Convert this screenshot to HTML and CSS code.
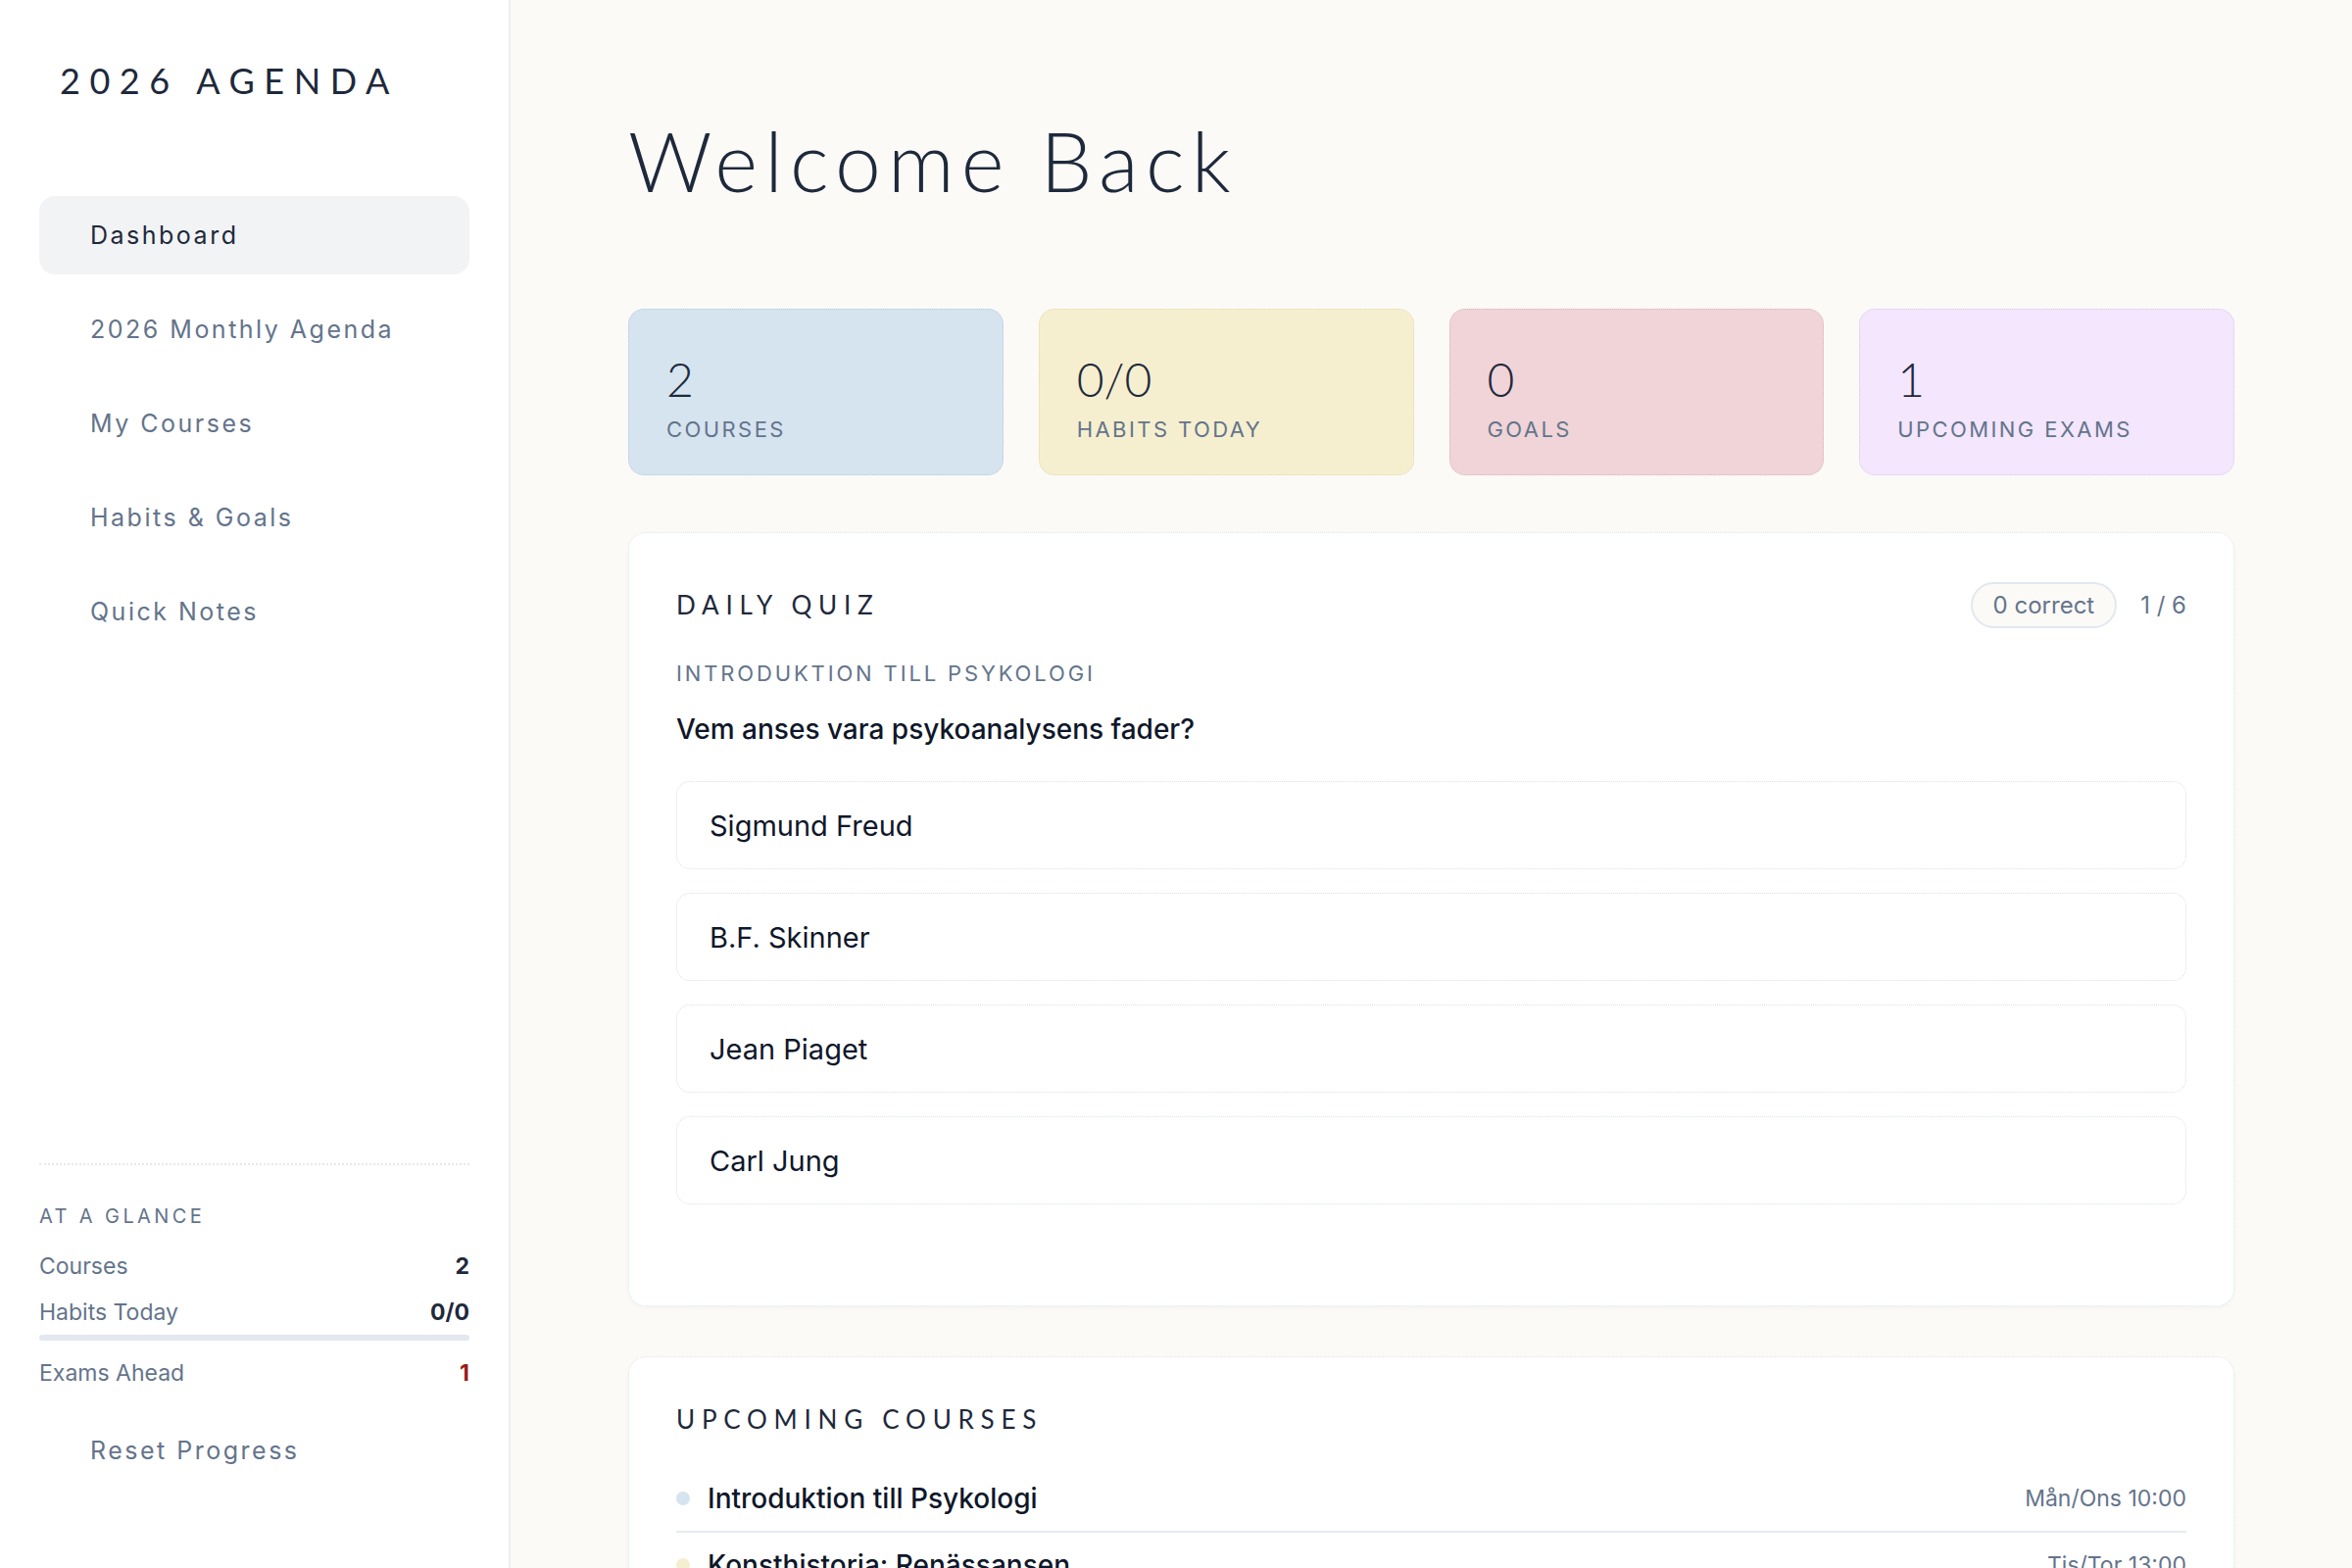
FILE: index.html
```html
<!DOCTYPE html>
<html lang="en">
<head>
  <meta charset="UTF-8">
  <title>2026 Agenda</title>
  <link rel="stylesheet" href="styles.css">
</head>
<body>

  <aside class="sidebar">
    <div class="brand">2026 AGENDA</div>

    <nav class="nav">
      <a class="nav-item active">Dashboard</a>
      <a class="nav-item">2026 Monthly Agenda</a>
      <a class="nav-item">My Courses</a>
      <a class="nav-item">Habits &amp; Goals</a>
      <a class="nav-item">Quick Notes</a>
    </nav>

    <div class="glance">
      <div class="glance-title">AT A GLANCE</div>
      <div class="glance-row"><span>Courses</span><strong>2</strong></div>
      <div class="glance-row habits"><span>Habits Today</span><strong>0/0</strong></div>
      <div class="glance-bar"><div class="glance-fill" style="width: 0%"></div></div>
      <div class="glance-row"><span>Exams Ahead</span><strong class="alert">1</strong></div>
    </div>

    <button class="reset">Reset Progress</button>
  </aside>

  <main class="main">
    <h1 class="welcome">Welcome Back</h1>

    <!-- Stats -->
    <div class="stats">
      <div class="stat blue">
        <div class="stat-num">2</div>
        <div class="stat-label">COURSES</div>
      </div>
      <div class="stat yellow">
        <div class="stat-num">0/0</div>
        <div class="stat-label">HABITS TODAY</div>
      </div>
      <div class="stat pink">
        <div class="stat-num">0</div>
        <div class="stat-label">GOALS</div>
      </div>
      <div class="stat lavender">
        <div class="stat-num">1</div>
        <div class="stat-label">UPCOMING EXAMS</div>
      </div>
    </div>

    <!-- Quiz -->
    <section class="card quiz">
      <div class="quiz-head">
        <h2 class="card-title">DAILY QUIZ</h2>
        <div class="quiz-meta">
          <span class="score">0 correct</span>
          <span class="count">1 / 6</span>
        </div>
      </div>
      <div class="quiz-course">INTRODUKTION TILL PSYKOLOGI</div>
      <div class="quiz-question">Vem anses vara psykoanalysens fader?</div>
      <div class="options">
        <button class="option">Sigmund Freud</button>
        <button class="option">B.F. Skinner</button>
        <button class="option">Jean Piaget</button>
        <button class="option">Carl Jung</button>
      </div>
    </section>

    <!-- Upcoming -->
    <section class="card upcoming">
      <h2 class="card-title">UPCOMING COURSES</h2>
      <div class="course-list">
        <div class="course-row">
          <span class="dot blue-dot"></span>
          <span class="course-name">Introduktion till Psykologi</span>
          <span class="course-time">Mån/Ons 10:00</span>
        </div>
        <div class="course-row">
          <span class="dot yellow-dot"></span>
          <span class="course-name">Konsthistoria: Renässansen</span>
          <span class="course-time">Tis/Tor 13:00</span>
        </div>
      </div>
    </section>
  </main>

</body>
</html>
```

FILE: styles.css
```css
body {
  margin: 0;
  height: 100vh;
  display: flex;
  overflow: hidden;
  background: #fbfaf7;
  font-family: 'Inter', 'Liberation Sans', sans-serif;
  color: #1e293b;
}

/* Sidebar */
.sidebar {
  width: 521px;
  flex-shrink: 0;
  box-sizing: border-box;
  background: #fff;
  border-right: 2px solid #eceef1;
  padding: 60px 40px 101px;
  display: flex;
  flex-direction: column;
}

.brand {
  font-family: 'Lato', sans-serif;
  font-weight: 400;
  font-size: 36px;
  line-height: 44px;
  letter-spacing: 0.265em;
  padding-left: 21px;
  color: #1e293b;
}

.nav {
  margin-top: 96px;
  display: flex;
  flex-direction: column;
  gap: 16px;
}

.nav-item {
  display: block;
  height: 80px;
  line-height: 80px;
  padding: 0 52px;
  border-radius: 16px;
  font-size: 25px;
  letter-spacing: 0.1em;
  color: #64748b;
  cursor: pointer;
}

.nav-item.active {
  background: #f2f3f5;
  color: #1e293b;
}

.glance {
  margin-top: auto;
  border-top: 2px dotted #e5e8ee;
  padding-top: 38px;
}

.glance-title {
  font-size: 20px;
  line-height: 28px;
  letter-spacing: 0.17em;
  color: #64748b;
  margin-bottom: 22px;
}

.glance-row {
  display: flex;
  justify-content: space-between;
  font-size: 23px;
  line-height: 30px;
  color: #64748b;
  margin-bottom: 17px;
}

.glance-row.habits {
  margin-bottom: 8px;
}

.glance-row:last-child {
  margin-bottom: 0;
}

.glance-row strong {
  color: #1e293b;
  font-weight: 700;
}

.glance-row strong.alert {
  color: #991b1b;
}

.glance-bar {
  height: 6px;
  border-radius: 3px;
  background: #e2e8f0;
  margin-bottom: 18px;
  overflow: hidden;
}

.glance-fill {
  height: 100%;
  background: #94a3b8;
}

.reset {
  margin-top: 45px;
  align-self: flex-start;
  background: none;
  border: none;
  padding: 0 52px;
  font-family: inherit;
  font-size: 25px;
  line-height: 38px;
  letter-spacing: 0.1em;
  color: #64748b;
  cursor: pointer;
}

/* Main */
.main {
  flex: 1;
  min-width: 0;
  padding: 113px 120px 0;
  overflow: hidden;
}

.welcome {
  margin: 0 0 101px;
  font-family: 'Lato', sans-serif;
  font-weight: 300;
  font-size: 84px;
  line-height: 101px;
  letter-spacing: 0.085em;
  color: #1e293b;
}

.stats {
  display: grid;
  grid-template-columns: repeat(4, 1fr);
  gap: 36px;
}

.stat {
  border: 1px dotted;
  border-radius: 16px;
  padding: 47px 38px 31px;
}

.stat.blue { background: #d6e4f0; border-color: #b4c8dc; }
.stat.yellow { background: #f6efcf; border-color: #e3d9a8; }
.stat.pink { background: #f0d4d8; border-color: #dcb3ba; }
.stat.lavender { background: #f3e6fd; border-color: #d8c6ee; }

.stat-num {
  font-family: 'Lato', sans-serif;
  font-weight: 300;
  font-size: 48px;
  line-height: 48px;
  color: #1e293b;
}

.stat-label {
  margin-top: 12px;
  font-size: 22px;
  line-height: 30px;
  letter-spacing: 0.11em;
  color: #64748b;
}

.card {
  background: #fff;
  border: 1px dotted #dde3eb;
  border-radius: 18px;
  box-shadow: 0 2px 4px rgba(15, 23, 42, 0.03);
  padding: 48px;
}

.card-title {
  margin: 0;
  font-family: 'Lato', sans-serif;
  font-weight: 400;
  font-size: 26px;
  line-height: 31px;
  letter-spacing: 0.26em;
  color: #1e293b;
}

.quiz {
  margin-top: 58px;
  padding-top: 50px;
}

.quiz-head {
  display: flex;
  justify-content: space-between;
  align-items: center;
  height: 47px;
}

.quiz-meta {
  display: flex;
  align-items: center;
  gap: 24px;
  font-size: 24px;
  color: #64748b;
}

.score {
  height: 47px;
  box-sizing: border-box;
  line-height: 43px;
  padding: 0 21px;
  border: 2px solid #e2e8f0;
  border-radius: 999px;
  background: #fbfaf7;
}

.quiz-course {
  margin-top: 31px;
  font-size: 22px;
  line-height: 30px;
  letter-spacing: 0.13em;
  color: #64748b;
}

.quiz-question {
  margin-top: 24px;
  font-size: 28px;
  line-height: 36px;
  font-weight: 500;
  color: #0f172a;
}

.options {
  margin: 35px 0 55px;
  display: flex;
  flex-direction: column;
  gap: 24px;
}

.option {
  height: 90px;
  padding: 0 33px;
  text-align: left;
  background: #fff;
  border: 1px dotted #d9e0ea;
  border-radius: 14px;
  font-family: inherit;
  font-size: 29px;
  color: #0f172a;
  cursor: pointer;
}

.upcoming {
  margin-top: 51px;
}

.course-list {
  margin-top: 32px;
}

.course-row {
  display: flex;
  align-items: center;
  padding: 15px 0;
  line-height: 36px;
  border-bottom: 2px solid #e6ebf2;
}

.dot {
  width: 14px;
  height: 14px;
  border-radius: 50%;
  margin-right: 18px;
  flex-shrink: 0;
}

.blue-dot { background: #d6e4f0; }
.yellow-dot { background: #f6efcf; }

.course-name {
  flex: 1;
  font-size: 28px;
  font-weight: 500;
  color: #0f172a;
}

.course-time {
  font-size: 23px;
  color: #64748b;
}
```
